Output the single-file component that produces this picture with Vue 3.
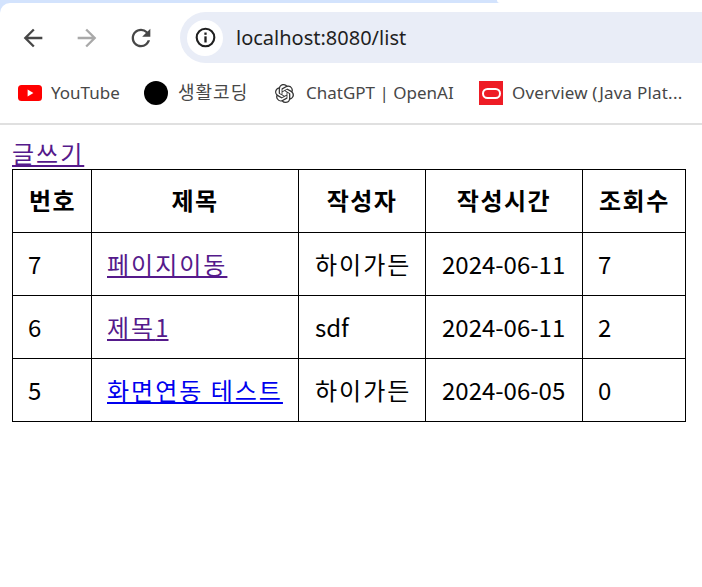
<script setup>
const rows = [
  { id: 7, title: '페이지이동', author: '하이가든', date: '2024-06-11', views: 7, visited: true },
  { id: 6, title: '제목1', author: 'sdf', date: '2024-06-11', views: 2, visited: true },
  { id: 5, title: '화면연동 테스트', author: '하이가든', date: '2024-06-05', views: 0, visited: false },
]
const parts = (text) => text.split(/([가-힣 ]+)/).filter(Boolean).map((t) => ({ t, ko: /[가-힣]/.test(t) }))
</script>

<template>
  <div class="page">
    <header class="chrome">
      <div class="strip"><div class="tab-edge"></div></div>
      <div class="toolbar">
        <div class="nav">
          <svg viewBox="0 0 24 24" width="28" height="28"><path d="M20 11H7.83l5.59-5.59L12 4l-8 8 8 8 1.41-1.41L7.83 13H20v-2z" fill="#474747"/></svg>
          <svg viewBox="0 0 24 24" width="28" height="28"><path d="M4 11h12.17l-5.59-5.59L12 4l8 8-8 8-1.41-1.41L16.17 13H4v-2z" fill="#a9a9a9"/></svg>
          <svg viewBox="0 0 24 24" width="28" height="28"><path d="M17.65 6.35A7.958 7.958 0 0 0 12 4c-4.42 0-7.99 3.58-7.99 8s3.57 8 7.99 8c3.73 0 6.84-2.55 7.73-6h-2.08A5.99 5.99 0 0 1 12 18c-3.31 0-6-2.69-6-6s2.69-6 6-6c1.66 0 3.14.69 4.22 1.78L13 11h7V4l-2.35 2.35z" fill="#474747"/></svg>
        </div>
        <div class="omnibox">
          <span class="site-info">
            <svg viewBox="0 0 24 24" width="23" height="23"><circle cx="12" cy="12" r="9.2" fill="none" stroke="#1f1f1f" stroke-width="2.2"/><rect x="10.8" y="10.8" width="2.4" height="6.4" fill="#1f1f1f"/><rect x="10.8" y="6.8" width="2.4" height="2.4" fill="#1f1f1f"/></svg>
          </span>
          <span class="url">localhost:8080/list</span>
        </div>
      </div>
      <div class="bookmarks">
        <span class="bm bm-yt">
          <svg viewBox="0 0 24 24" width="24" height="24"><rect x="0" y="4" width="24" height="16" rx="3.5" fill="#ff0000"/><path d="M9.6 8.6v6.8l5.8-3.4z" fill="#fff"/></svg>
          <span class="label">YouTube</span>
        </span>
        <span class="bm bm-coding">
          <span class="dot"></span>
          <span class="coding-label">생활코딩</span>
        </span>
        <span class="bm bm-gpt">
          <svg viewBox="0 0 24 24" width="19" height="19"><path fill="#333" d="M22.2819 9.8211a5.9847 5.9847 0 0 0-.5157-4.9108 6.0462 6.0462 0 0 0-6.5098-2.9A6.0651 6.0651 0 0 0 4.9807 4.1818a5.9847 5.9847 0 0 0-3.9977 2.9 6.0462 6.0462 0 0 0 .7427 7.0966 5.98 5.98 0 0 0 .511 4.9107 6.051 6.051 0 0 0 6.5146 2.9001A5.9847 5.9847 0 0 0 13.2599 24a6.0557 6.0557 0 0 0 5.7718-4.2058 5.9894 5.9894 0 0 0 3.9977-2.9001 6.0557 6.0557 0 0 0-.7475-7.0729zm-9.022 12.6081a4.4755 4.4755 0 0 1-2.8764-1.0408l.1419-.0804 4.7783-2.7582a.7948.7948 0 0 0 .3927-.6813v-6.7369l2.02 1.1686a.071.071 0 0 1 .038.052v5.5826a4.504 4.504 0 0 1-4.4945 4.4944zm-9.6607-4.1254a4.4708 4.4708 0 0 1-.5346-3.0137l.142.0852 4.783 2.7582a.7712.7712 0 0 0 .7806 0l5.8428-3.3685v2.3324a.0804.0804 0 0 1-.0332.0615L9.74 19.9502a4.4992 4.4992 0 0 1-6.1408-1.6464zM2.3408 7.8956a4.485 4.485 0 0 1 2.3655-1.9728V11.6a.7664.7664 0 0 0 .3879.6765l5.8144 3.3543-2.0201 1.1685a.0757.0757 0 0 1-.071 0l-4.8303-2.7865A4.504 4.504 0 0 1 2.3408 7.872zm16.5963 3.8558L13.1038 8.364 15.1192 7.2a.0757.0757 0 0 1 .071 0l4.8303 2.7913a4.4944 4.4944 0 0 1-.6765 8.1042v-5.6772a.79.79 0 0 0-.407-.667zm2.0107-3.0231l-.142-.0852-4.7735-2.7818a.7759.7759 0 0 0-.7854 0L9.409 9.2297V6.8974a.0662.0662 0 0 1 .0284-.0615l4.8303-2.7866a4.4992 4.4992 0 0 1 6.6802 4.66zM8.3065 12.863l-2.02-1.1638a.0804.0804 0 0 1-.038-.0567V6.0742a4.4992 4.4992 0 0 1 7.3757-3.4537l-.142.0805L8.704 5.459a.7948.7948 0 0 0-.3927.6813zm1.0976-2.3654l2.602-1.4998 2.6069 1.4998v2.9994l-2.5974 1.4997-2.6067-1.4997Z"/></svg>
          <span class="label">ChatGPT | OpenAI</span>
        </span>
        <span class="bm bm-java">
          <span class="oracle"><span class="oracle-ring"></span></span>
          <span class="label java-label">Overview (Java Plat...</span>
        </span>
      </div>
    </header>

    <main class="content">
      <a class="write visited" href="#">글쓰기</a>
      <table class="board">
        <colgroup>
          <col class="c1" /><col class="c2" /><col class="c3" /><col class="c4" /><col class="c5" />
        </colgroup>
        <thead>
          <tr>
            <th>번호</th>
            <th>제목</th>
            <th>작성자</th>
            <th>작성시간</th>
            <th>조회수</th>
          </tr>
        </thead>
        <tbody>
          <tr v-for="r in rows" :key="r.id">
            <td>{{ r.id }}</td>
            <td><a href="#" :class="r.visited ? 'visited' : 'fresh'"><span v-for="(p, i) in parts(r.title)" :key="i" :class="{ ko: p.ko }">{{ p.t }}</span></a></td>
            <td><span v-for="(p, i) in parts(r.author)" :key="i" :class="{ ko: p.ko }">{{ p.t }}</span></td>
            <td>{{ r.date }}</td>
            <td>{{ r.views }}</td>
          </tr>
        </tbody>
      </table>
    </main>
  </div>
</template>

<style>
html, body { margin: 0; background: #fff; }
</style>

<style scoped>
.page {
  width: 702px;
  height: 587px;
  overflow: hidden;
  background: #fff;
  font-family: "Noto Sans CJK KR", "Noto Sans", sans-serif;
}
.chrome {
  height: 125px;
  box-sizing: border-box;
  border-bottom: 2px solid #e0e0e0;
  background: #d3e3fd;
}
.strip { height: 3px; display: flex; justify-content: flex-end; }
.tab-edge { width: 205px; height: 3px; background: #fff; border-bottom-left-radius: 6px; }
.toolbar {
  height: 60px;
  box-sizing: border-box;
  padding-top: 9px;
  background: #fff;
  border-top-left-radius: 10px;
  display: flex;
  align-items: center;
}
.nav { display: flex; width: 180px; flex: none; padding-left: 19px; box-sizing: border-box; gap: 26px; }
.omnibox {
  flex: 1;
  height: 51px;
  background: #e9edf7;
  border-radius: 26px 0 0 26px;
  display: flex;
  align-items: center;
  padding-left: 7px;
  box-sizing: border-box;
}
.site-info {
  width: 36px;
  height: 36px;
  border-radius: 50%;
  background: #fff;
  display: flex;
  align-items: center;
  justify-content: center;
}
.url {
  margin-left: 13px;
  font-size: 20px;
  color: #1f1f1f;
  font-family: "Noto Sans", "Open Sans", sans-serif;
}
.bookmarks {
  height: 60px;
  background: #fff;
  display: flex;
  align-items: center;
  font-size: 17px;
  color: #474747;
  font-family: "Noto Sans", "Noto Sans CJK KR", sans-serif;
  white-space: nowrap;
}
.bm { display: flex; align-items: center; flex: none; }
.label { margin-bottom: 2px; }
.bm-yt { margin-left: 18px; gap: 9px; width: 126px; }
.bm-coding { gap: 10px; width: 131px; }
.dot { width: 24px; height: 24px; border-radius: 50%; background: #000; }
.coding-label { margin-bottom: 4px; font-size: 18px; letter-spacing: 1px; }
.bm-gpt { gap: 12px; width: 204px; }
.bm-java { gap: 9px; }
.java-label { letter-spacing: 0.2px; }
.oracle {
  width: 24px;
  height: 24px;
  background: #ee1c25;
  display: flex;
  align-items: center;
  justify-content: center;
}
.oracle-ring {
  width: 19px;
  height: 11px;
  box-sizing: border-box;
  border: 2.5px solid #fff;
  border-radius: 6px;
}
.content {
  padding: 12px 12px 0;
  font-size: 24px;
  color: #000;
}
.write { display: block; width: max-content; line-height: 32px; height: 32px; letter-spacing: 2px; }
.visited { color: #551a8b; }
.fresh { color: #0000ee; }
a { text-decoration: underline; }
.ko { letter-spacing: 2px; }
.board {
  border-collapse: collapse;
  table-layout: fixed;
  width: 673px;
}
.c1 { width: 79px; }
.c2 { width: 207px; }
.c3 { width: 127px; }
.c4 { width: 157px; }
.c5 { width: 103px; }
th, td {
  border: 1px solid #000;
  height: 63px;
  padding: 0 16px;
  box-sizing: border-box;
  white-space: nowrap;
  line-height: 32px;
}
th { font-weight: 700; text-align: center; letter-spacing: 1.5px; padding-bottom: 2px; }
td { text-align: left; }
td:nth-child(1), td:nth-child(2), td:nth-child(5) { padding-left: 15px; }
</style>
